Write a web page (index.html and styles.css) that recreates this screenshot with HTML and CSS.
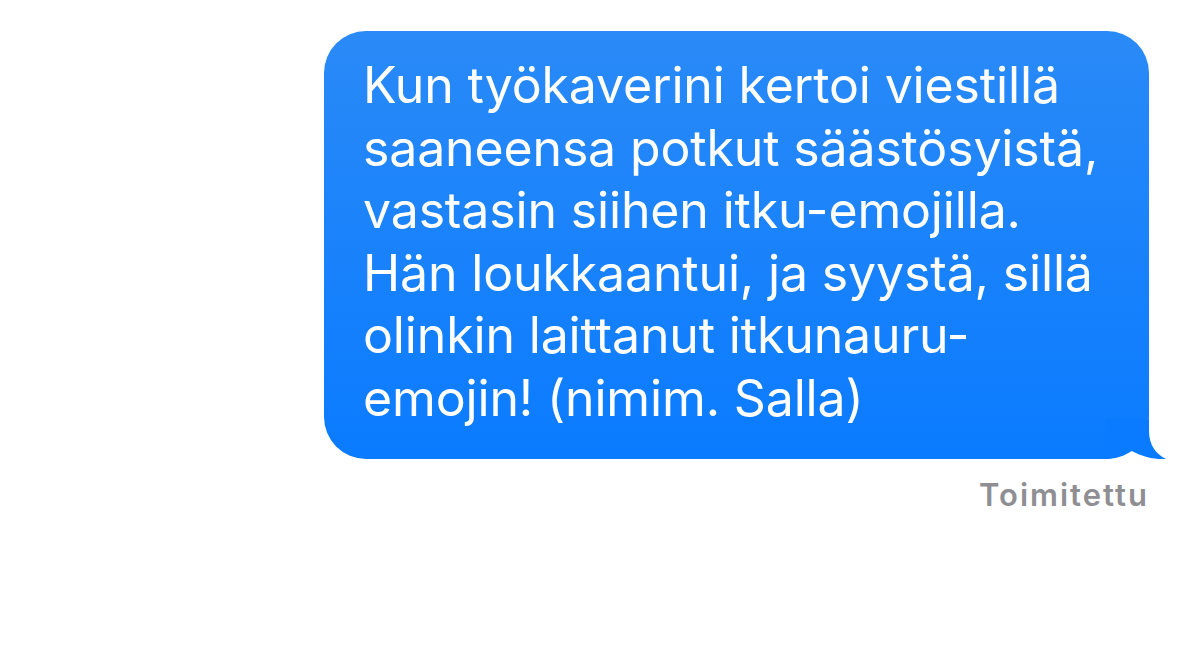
FILE: index.html
```html
<!DOCTYPE html>
<html lang="fi">
<head>
<meta charset="utf-8">
<link rel="stylesheet" href="styles.css">
</head>
<body>
<main class="thread">
  <div class="bubble">
    <p class="msg">Kun työkaverini kertoi viestillä<br>saaneensa potkut säästösyistä,<br>vastasin siihen itku-emojilla.<br>Hän loukkaantui, ja syystä, sillä<br>olinkin laittanut itkunauru-<br>emojin! (nimim. Salla)</p>
    <svg class="tail" width="60" height="40" viewBox="0 0 60 40" aria-hidden="true">
      <path d="M0,0 H43 V12 C43,26 50,35 60,40 C48,41 34,37 22,30 C16,36 8,40 0,40 Z" fill="#0a7bff"/>
    </svg>
  </div>
  <div class="status">Toimitettu</div>
</main>
</body>
</html>
```
FILE: styles.css
```css
html, body {
  margin: 0;
  padding: 0;
  background: #ffffff;
}
.thread {
  display: flex;
  flex-direction: column;
  align-items: flex-end;
  padding: 31px 50px 0 0;
  font-family: Inter, "Liberation Sans", sans-serif;
}
.bubble {
  position: relative;
  width: 825px;
  box-sizing: border-box;
  padding: 23px 20px 30px 39px;
  border-radius: 42px;
  background: linear-gradient(to bottom, #2a8af7 0%, #0a7bff 100%);
}
.msg {
  margin: 0;
  color: #ffffff;
  font-size: 50px;
  line-height: 62.5px;
  font-weight: 400;
  letter-spacing: -0.15px;
  white-space: nowrap;
}
.tail {
  position: absolute;
  right: -17px;
  bottom: 0;
  display: block;
}
.status {
  margin-top: 18px;
  margin-right: 0;
  color: #8e8e93;
  font-size: 31px;
  line-height: 36px;
  font-weight: 600;
  letter-spacing: 2px;
}
```
